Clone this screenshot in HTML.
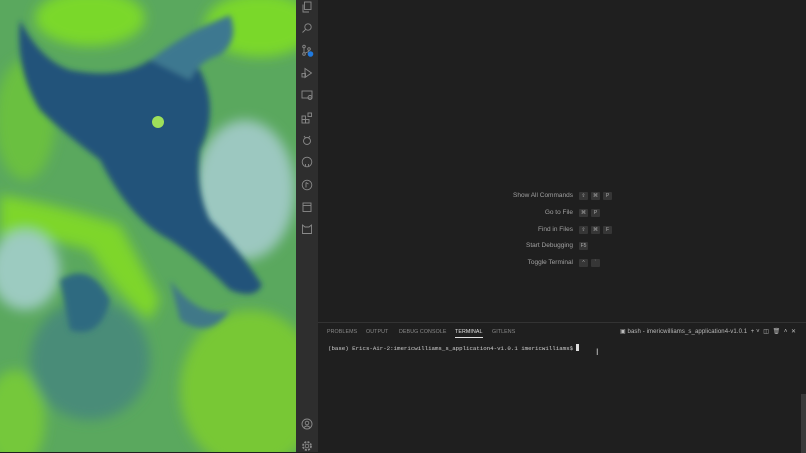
<!DOCTYPE html>
<html><head><meta charset="utf-8"><style>
*{margin:0;padding:0;box-sizing:border-box}
body{width:806px;height:452px;overflow:hidden;background:#1f1f1f;font-family:"Liberation Sans",sans-serif;position:relative}
#art{position:absolute;left:0;top:0;width:296px;height:452px}
#act{position:absolute;left:296px;top:0;width:22px;height:452px;background:#2e2e2e}
#act svg{position:absolute;left:5px}
#ed{position:absolute;left:318px;top:0;width:488px;height:322px;background:#1f1f1f}
.row{position:absolute;font-size:6.5px;color:#a0a0a0;right:0;width:488px}
.row .l{position:absolute;right:233px;text-align:right;white-space:nowrap}
.row .k{position:absolute;left:261px;display:flex;gap:3px}
.k span{display:inline-block;min-width:9px;height:8px;background:#363636;color:#aaa;font-size:5px;line-height:8px;text-align:center;border-radius:1px;padding:0 1px}
#panel{position:absolute;left:318px;top:322px;width:488px;height:130px;background:#1f1f1f;border-top:1px solid #333}
.tab{position:absolute;top:6px;font-size:5.3px;color:#8a8a8a;letter-spacing:.1px}
#term{position:absolute;left:10px;top:21px;font-family:"Liberation Mono",monospace;font-size:5.75px;color:#cfcfcf;white-space:nowrap}
</style></head><body>
<svg id="art" viewBox="0 0 296 452" preserveAspectRatio="none">
<defs><filter id="b"><feGaussianBlur stdDeviation="6"/></filter><filter id="b2"><feGaussianBlur stdDeviation="3"/></filter></defs>
<rect width="296" height="452" fill="#5aa85e"/>
<g filter="url(#b)">
<ellipse cx="90" cy="18" rx="55" ry="28" fill="#7ad82a"/>
<ellipse cx="260" cy="25" rx="55" ry="32" fill="#7ad82a"/>
<path d="M0 195 Q60 205 120 225 L160 300 L150 320 Q120 300 90 250 Q40 235 0 240Z" fill="#7ed62c"/>
<ellipse cx="250" cy="390" rx="70" ry="80" fill="#78c834"/>
<ellipse cx="15" cy="420" rx="30" ry="50" fill="#74c83a"/>
<ellipse cx="245" cy="190" rx="50" ry="70" fill="#9cc8c0"/>
<ellipse cx="25" cy="270" rx="35" ry="40" fill="#9ccbc0"/>
<ellipse cx="90" cy="360" rx="60" ry="60" fill="#4a8c78"/>
<ellipse cx="25" cy="120" rx="30" ry="60" fill="#6ac040"/>
</g>
<g filter="url(#b2)">
<path d="M20 20 Q40 60 70 70 Q120 80 150 60 Q180 50 200 70 Q220 110 200 150 Q195 190 210 220 Q240 250 262 285 Q255 300 230 290 Q200 260 170 240 Q130 220 100 160 Q60 130 40 110 Q15 70 20 20Z" fill="#24527a"/>
<path d="M150 60 Q190 30 230 15 Q240 40 220 55 Q200 60 190 80Z" fill="#3e7890"/>
<path d="M60 280 Q90 260 110 300 Q100 340 70 330Z" fill="#2f6a80"/>
<path d="M170 280 Q200 320 230 310 Q210 340 180 320Z" fill="#3f7888"/>
</g>
<circle cx="158" cy="122" r="6" fill="#9ee05a"/>
</svg>
<div id="act">
<svg style="top:1px" width="12" height="12" viewBox="0 0 12 12" fill="none" stroke="#8a8a8a" stroke-width=".9"><rect x="3.5" y="1" width="6.5" height="7.5"/><path d="M2 3.5V11H8"/></svg>
<svg style="top:22px" width="12" height="12" viewBox="0 0 12 12" fill="none" stroke="#8a8a8a" stroke-width=".9"><circle cx="7" cy="5" r="3.2"/><path d="M4.6 7.4L1.5 10.5"/></svg>
<svg style="top:44px" width="14" height="14" viewBox="0 0 14 14" fill="none" stroke="#8a8a8a" stroke-width=".9"><circle cx="3" cy="2.5" r="1.3"/><circle cx="3" cy="10" r="1.3"/><circle cx="8" cy="5" r="1.3"/><path d="M3 4V8.7M8 6.3Q8 8 4 9"/><circle cx="9.5" cy="10" r="2.8" fill="#1f7ae0" stroke="none"/></svg>
<svg style="top:67px" width="12" height="12" viewBox="0 0 12 12" fill="none" stroke="#8a8a8a" stroke-width=".9"><path d="M4 1.5L10.5 6 4 10.5Z"/><rect x="1" y="6.5" width="3.5" height="3.5"/></svg>
<svg style="top:89px" width="12" height="12" viewBox="0 0 12 12" fill="none" stroke="#8a8a8a" stroke-width=".9"><rect x="1" y="2" width="10" height="7"/><circle cx="9" cy="8.5" r="2"/></svg>
<svg style="top:112px" width="12" height="12" viewBox="0 0 12 12" fill="none" stroke="#8a8a8a" stroke-width=".9"><rect x="1" y="4" width="3.5" height="3.5"/><rect x="1" y="7.5" width="3.5" height="3.5"/><rect x="4.5" y="7.5" width="3.5" height="3.5"/><rect x="7" y="1" width="3.5" height="3.5"/></svg>
<svg style="top:134px" width="12" height="12" viewBox="0 0 12 12" fill="none" stroke="#8a8a8a" stroke-width=".9"><circle cx="6" cy="7" r="3.5"/><path d="M3 2L4.5 4M9 2L7.5 4"/></svg>
<svg style="top:156px" width="12" height="12" viewBox="0 0 12 12" fill="none" stroke="#8a8a8a" stroke-width=".9"><circle cx="6" cy="6" r="4.8"/><path d="M4.5 10V8M7.5 10V8"/></svg>
<svg style="top:179px" width="12" height="12" viewBox="0 0 12 12" fill="none" stroke="#8a8a8a" stroke-width=".9"><circle cx="6" cy="6" r="4.8"/><path d="M5 3.5V8.5M5 3.5L7.5 5"/></svg>
<svg style="top:201px" width="12" height="12" viewBox="0 0 12 12" fill="none" stroke="#8a8a8a" stroke-width=".9"><rect x="2" y="2" width="8" height="8.5"/><path d="M2 4.5H10"/></svg>
<svg style="top:223px" width="12" height="12" viewBox="0 0 12 12" fill="none" stroke="#8a8a8a" stroke-width=".9"><path d="M1.5 10.5V2L4 4H8L10.5 2V10.5Z"/></svg>
<svg style="top:418px" width="12" height="12" viewBox="0 0 12 12" fill="none" stroke="#8a8a8a" stroke-width=".9"><circle cx="6" cy="6" r="5"/><circle cx="6" cy="5" r="1.8"/><path d="M3 9.5Q6 6.5 9 9.5"/></svg>
<svg style="top:440px" width="12" height="12" viewBox="0 0 12 12" fill="none" stroke="#8a8a8a" stroke-width=".9"><circle cx="6" cy="6" r="1.8"/><circle cx="6" cy="6" r="4" stroke-dasharray="2 1.2" stroke-width="1.8"/></svg>
</div>
<div id="ed">
<div class="row" style="top:192px"><span class="l">Show All Commands</span><span class="k"><span>⇧</span><span>⌘</span><span>P</span></span></div>
<div class="row" style="top:209px"><span class="l">Go to File</span><span class="k"><span>⌘</span><span>P</span></span></div>
<div class="row" style="top:226px"><span class="l">Find in Files</span><span class="k"><span>⇧</span><span>⌘</span><span>F</span></span></div>
<div class="row" style="top:242px"><span class="l">Start Debugging</span><span class="k"><span>F5</span></span></div>
<div class="row" style="top:259px"><span class="l">Toggle Terminal</span><span class="k"><span>^</span><span>`</span></span></div>
</div>
<div id="panel">
<span class="tab" style="left:9px">PROBLEMS</span>
<span class="tab" style="left:48px">OUTPUT</span>
<span class="tab" style="left:81px">DEBUG CONSOLE</span>
<span class="tab" style="left:137px;color:#e0e0e0;border-bottom:1px solid #e0e0e0;padding-bottom:2px">TERMINAL</span>
<span class="tab" style="left:174px">GITLENS</span>
<span class="tab" style="left:302px;color:#bbb;font-size:6px;top:5px">▣ bash - imericwilliams_s_application4-v1.0.1 &nbsp;+ ˅ &nbsp;◫ &nbsp;🗑 &nbsp;˄ &nbsp;✕</span>
<div id="term">(base) Erics-Air-2:imericwilliams_s_application4-v1.0.1 imericwilliams$ <span style="display:inline-block;width:3px;height:7px;background:#ddd;vertical-align:-1px"></span></div>
<div style="position:absolute;left:278px;top:24px;color:#ccc;font-size:9px">I</div>
<div style="position:absolute;right:0;top:71px;width:5px;height:59px;background:#3a3a3a"></div>
</div>
</body></html>
